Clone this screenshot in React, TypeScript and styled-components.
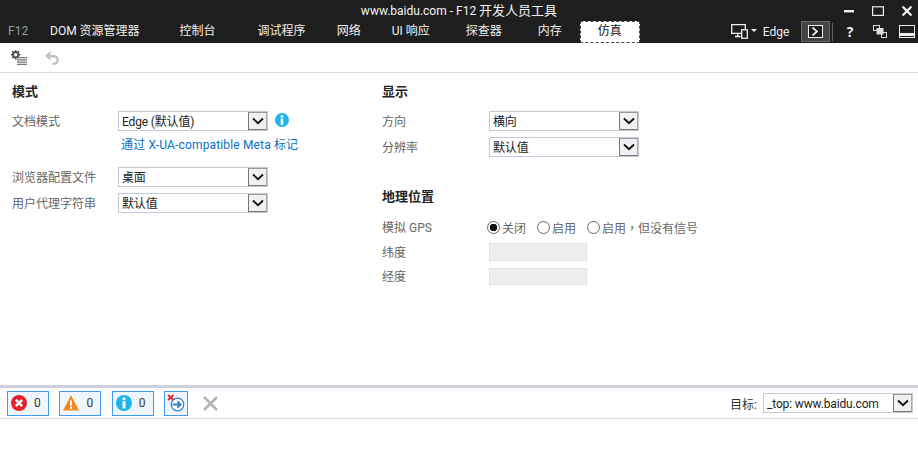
import React from "react"
import styled, { createGlobalStyle } from "styled-components"

const GlobalStyle = createGlobalStyle`
  html, body {
    margin: 0;
    padding: 0;
    background: #fff;
  }
  body {
    font-family: Roboto, "Noto Sans CJK SC", sans-serif;
    font-size: 12px;
    color: #222;
  }
`

const tabs = [
  { label: "DOM 资源管理器", gap: 23 },
  { label: "控制台", gap: 40 },
  { label: "调试程序", gap: 42 },
  { label: "网络", gap: 31 },
  { label: "UI 响应", gap: 31 },
  { label: "探查器", gap: 36 },
  { label: "内存", gap: 36 },
]

function Chevron() {
  return (
    <svg width="12" height="8" viewBox="0 0 12 8">
      <path d="M1 1.5 L6 6.2 L11 1.5" fill="none" stroke="#111" strokeWidth="1.9" />
    </svg>
  )
}

function Dropdown({ value, width = 150 }: { value: string; width?: number }) {
  return (
    <Select $width={width}>
      <SelectValue>{value}</SelectValue>
      <SelectArrow>
        <Chevron />
      </SelectArrow>
    </Select>
  )
}

function InfoIcon({ size }: { size: number }) {
  return (
    <svg width={size} height={size} viewBox="0 0 16 16">
      <circle cx="8" cy="8" r="8" fill="#1eb4ec" />
      <circle cx="8" cy="3.8" r="1.5" fill="#fff" />
      <rect x="6.5" y="6.2" width="3" height="7.2" fill="#fff" />
    </svg>
  )
}

function ErrorIcon() {
  return (
    <svg width="16" height="16" viewBox="0 0 16 16">
      <circle cx="8" cy="8" r="8" fill="#e5202e" />
      <path d="M4.8 4.8 L11.2 11.2 M11.2 4.8 L4.8 11.2" stroke="#fff" strokeWidth="2.4" />
    </svg>
  )
}

function WarningIcon() {
  return (
    <svg width="16" height="16" viewBox="0 0 16 16">
      <path d="M8 0 L16 15.5 L0 15.5 Z" fill="#f58a1f" />
      <rect x="7" y="5.5" width="2" height="5.5" fill="#fff" />
      <rect x="7" y="12" width="2" height="2" fill="#fff" />
    </svg>
  )
}

function ClearOnNavigateIcon() {
  return (
    <svg width="18" height="18" viewBox="0 0 18 18">
      <circle cx="10.5" cy="10.5" r="6.3" fill="#fff" stroke="#2f7fc8" strokeWidth="1.2" />
      <path d="M5.5 10.5 H13.5 M10.5 7.5 L13.7 10.5 L10.5 13.5" fill="none" stroke="#2f7fc8" strokeWidth="1.8" />
      <path d="M1 1 L6.5 6 M6.5 1 L1 6" stroke="#e5202e" strokeWidth="1.7" />
    </svg>
  )
}

function SettingsListIcon() {
  return (
    <svg width="16" height="15" viewBox="0 0 16 15">
      <circle cx="4.7" cy="4.7" r="2.7" fill="none" stroke="#555" strokeWidth="2" />
      <path
        d="M4.7 0 V2 M4.7 7.5 V9.5 M0 4.7 H2 M7.5 4.7 H9.5 M1.3 1.3 L2.8 2.8 M6.6 6.6 L8.1 8.1 M8.1 1.3 L6.6 2.8 M2.8 6.6 L1.3 8.1"
        stroke="#444"
        strokeWidth="1.3"
      />
      <path d="M6 7.6 H16 M6 9.9 H16 M6 12.2 H16 M6 14.4 H16" stroke="#777" strokeWidth="1.3" />
    </svg>
  )
}

function UndoIcon() {
  return (
    <svg width="14" height="14" viewBox="0 0 14 14">
      <path d="M3 5.2 H8 C14 5.2 14.5 12.5 7.5 12.8" fill="none" stroke="#c4c4c4" strokeWidth="2.6" />
      <path d="M0 5 L5.5 0 V9.5 Z" fill="#c4c4c4" />
    </svg>
  )
}

function DeviceIcon() {
  return (
    <svg width="17" height="15" viewBox="0 0 17 15">
      <path d="M0.7 0.7 H14.3 V9.3 H0.7 Z M4 12.5 H9.5 M6.8 9.5 V12.5" fill="none" stroke="#f0f0f0" strokeWidth="1.3" />
      <rect x="10.7" y="5.7" width="5.6" height="8.6" fill="#1e1e1e" stroke="#f0f0f0" strokeWidth="1.3" />
    </svg>
  )
}

function ConsoleIcon() {
  return (
    <svg width="15" height="13" viewBox="0 0 15 13">
      <rect x="0.5" y="0.5" width="14" height="12" fill="#1e1e1e" stroke="#eee" />
      <path d="M4.5 2.5 L9 6.5 L4.5 10.5" fill="none" stroke="#eee" strokeWidth="1.7" />
    </svg>
  )
}

function CascadeIcon() {
  return (
    <svg width="14" height="13" viewBox="0 0 14 13">
      <rect x="0.5" y="0.5" width="6" height="5" fill="none" stroke="#ddd" />
      <rect x="8.5" y="7.5" width="5" height="5" fill="none" stroke="#ddd" />
      <rect x="3.5" y="3" width="7" height="6.5" fill="#ddd" />
    </svg>
  )
}

function DockIcon() {
  return (
    <svg width="16" height="13" viewBox="0 0 16 13">
      <rect x="0.5" y="0.5" width="15" height="12" fill="none" stroke="#eee" />
      <rect x="1" y="8" width="14" height="3" fill="#eee" />
    </svg>
  )
}

export default function App() {
  return (
    <Page>
      <GlobalStyle />
      <Header>
        <TitleRow>
          <span />
          <Title>
            www.baidu.com - F12 <TitleCjk>开发人员工具</TitleCjk>
          </Title>
          <WindowButtons>
            <svg width="10" height="3" viewBox="0 0 10 3">
              <rect width="10" height="2.4" fill="#eee" />
            </svg>
            <svg width="12" height="10" viewBox="0 0 12 10">
              <rect x="0.6" y="0.8" width="10.8" height="8.6" fill="none" stroke="#eee" strokeWidth="1.2" />
            </svg>
            <svg width="10" height="10" viewBox="0 0 10 10">
              <path d="M0.5 0.5 L9.5 9.5 M9.5 0.5 L0.5 9.5" stroke="#f4f4f4" strokeWidth="2.2" />
            </svg>
          </WindowButtons>
        </TitleRow>
        <TabRow>
          <Brand>F12</Brand>
          {tabs.map(tab => (
            <Tab key={tab.label} $gap={tab.gap}>
              {tab.label}
            </Tab>
          ))}
          <ActiveTab>仿真</ActiveTab>
          <TabTools>
            <DeviceIcon />
            <Caret />
            <EngineName>Edge</EngineName>
            <ConsoleButton>
              <ConsoleIcon />
            </ConsoleButton>
            <ToolDivider />
            <HelpMark>?</HelpMark>
            <CascadeSlot>
              <CascadeIcon />
            </CascadeSlot>
            <DockIcon />
          </TabTools>
        </TabRow>
      </Header>

      <Toolbar>
        <SettingsListIcon />
        <UndoIcon />
      </Toolbar>

      <Content>
        <LeftColumn>
          <SectionTitle>模式</SectionTitle>
          <FieldRow>
            <FieldLabel>文档模式</FieldLabel>
            <Dropdown value="Edge (默认值)" />
            <InfoSlot>
              <InfoIcon size={14} />
            </InfoSlot>
          </FieldRow>
          <MetaLink>通过 X-UA-compatible Meta 标记</MetaLink>
          <FieldRow>
            <FieldLabel>浏览器配置文件</FieldLabel>
            <Dropdown value="桌面" />
          </FieldRow>
          <FieldRow>
            <FieldLabel>用户代理字符串</FieldLabel>
            <Dropdown value="默认值" />
          </FieldRow>
        </LeftColumn>

        <RightColumn>
          <SectionTitle>显示</SectionTitle>
          <FieldRow>
            <FieldLabel>方向</FieldLabel>
            <Dropdown value="横向" />
          </FieldRow>
          <FieldRow>
            <FieldLabel>分辨率</FieldLabel>
            <Dropdown value="默认值" />
          </FieldRow>
          <GeoTitle>地理位置</GeoTitle>
          <GpsRow>
            <FieldLabel>模拟 GPS</FieldLabel>
            <RadioGroup>
              <RadioOption>
                <Radio $checked />
                关闭
              </RadioOption>
              <RadioOption>
                <Radio />
                启用
              </RadioOption>
              <RadioOption>
                <Radio />
                <span>
                  启用<CenteredComma>，</CenteredComma>但没有信号
                </span>
              </RadioOption>
            </RadioGroup>
          </GpsRow>
          <CoordRow>
            <FieldLabel>纬度</FieldLabel>
            <CoordInput $height={18} />
          </CoordRow>
          <CoordRow>
            <FieldLabel>经度</FieldLabel>
            <CoordInput $height={17} />
          </CoordRow>
        </RightColumn>
      </Content>

      <ConsoleBar>
        <CountButton>
          <ErrorIcon />
          <Count>0</Count>
        </CountButton>
        <CountButton>
          <WarningIcon />
          <Count>0</Count>
        </CountButton>
        <CountButton>
          <InfoIcon size={16} />
          <Count>0</Count>
        </CountButton>
        <ClearToggle>
          <ClearOnNavigateIcon />
        </ClearToggle>
        <ClearAll>
          <svg width="15" height="15" viewBox="0 0 15 15">
            <path d="M1 1 L14 14 M14 1 L1 14" stroke="#b4b4b4" strokeWidth="2.6" />
          </svg>
        </ClearAll>
        <TargetBox>
          <TargetLabel>目标:</TargetLabel>
          <Dropdown value="_top: www.baidu.com" />
        </TargetBox>
      </ConsoleBar>
    </Page>
  )
}

const Page = styled.div`
  display: flex;
  flex-direction: column;
  width: 918px;
  height: 464px;
  overflow: hidden;
`

const Header = styled.header`
  display: flex;
  flex-direction: column;
  height: 43px;
  background: #1e1e1e;
  color: #f0f0f0;
`

const TitleRow = styled.div`
  display: grid;
  grid-template-columns: 1fr auto 1fr;
  align-items: center;
  height: 21px;
`

const Title = styled.div`
  font-size: 12px;
  line-height: 21px;
  color: #f4f4f4;
`

const TitleCjk = styled.span`
  font-size: 13px;
`

const WindowButtons = styled.div`
  display: flex;
  justify-content: flex-end;
  align-items: center;
  gap: 18px;
  padding-right: 6px;
`

const TabRow = styled.nav`
  display: flex;
  align-items: stretch;
  height: 22px;
  padding-left: 8px;
`

const Brand = styled.div`
  width: 19px;
  line-height: 21px;
  font-size: 12px;
  color: #9a9a9a;
`

const Tab = styled.div<{ $gap: number }>`
  margin-left: ${p => p.$gap}px;
  line-height: 21px;
  font-size: 12px;
  white-space: nowrap;
  color: #f0f0f0;
`

const ActiveTab = styled.div`
  box-sizing: border-box;
  width: 60px;
  margin-left: 18px;
  border: 1px dashed #444;
  background: #fff;
  color: #111;
  font-size: 12px;
  line-height: 19px;
  text-align: center;
`

const TabTools = styled.div`
  display: flex;
  align-items: center;
  margin-left: 91px;
  height: 21px;
`

const Caret = styled.span`
  width: 0;
  height: 0;
  margin: 0 6px 3px 3px;
  border-left: 3px solid transparent;
  border-right: 3px solid transparent;
  border-top: 3px solid #eee;
`

const EngineName = styled.span`
  width: 38px;
  font-size: 12px;
  color: #eee;
`

const ConsoleButton = styled.div`
  box-sizing: border-box;
  display: flex;
  align-items: center;
  justify-content: center;
  width: 29px;
  height: 21px;
  border: 1px solid #6a6a6a;
  background: #444;
`

const ToolDivider = styled.div`
  width: 1px;
  height: 18px;
  margin: 0 14px 0 2px;
  background: #666;
`

const HelpMark = styled.span`
  width: 26px;
  font-family: "Open Sans", sans-serif;
  font-weight: 700;
  font-size: 14px;
  color: #eee;
`

const CascadeSlot = styled.span`
  display: flex;
  margin-right: 12px;
`

const Toolbar = styled.div`
  display: flex;
  align-items: center;
  gap: 18px;
  height: 29px;
  padding-left: 11px;
  border-bottom: 1px solid #dcdcdc;
`

const Content = styled.main`
  display: flex;
  box-sizing: border-box;
  height: 315px;
  border-bottom: 3px solid #cfd0da;
`

const LeftColumn = styled.section`
  width: 370px;
  padding: 9px 0 0 12px;
  box-sizing: border-box;
`

const SectionTitle = styled.h2`
  margin: 0 0 10px;
  font-size: 13px;
  font-weight: 700;
  line-height: 19px;
  color: #222;
`

const GeoTitle = styled(SectionTitle)`
  margin: 30px 0 11px;
`

const FieldRow = styled.div`
  display: flex;
  align-items: center;
  margin-bottom: 6px;
`

const GpsRow = styled(FieldRow)`
  height: 20px;
`

const CoordRow = styled(FieldRow)`
  height: 18px;
`

const FieldLabel = styled.label`
  width: 106px;
  flex: none;
  padding-bottom: 2px;
  font-size: 12px;
  color: #666;
`

const RightColumn = styled.section`
  padding: 9px 0 0 12px;

  ${FieldLabel} {
    width: 107px;
  }
`

const InfoSlot = styled.span`
  display: flex;
  margin-left: 7px;
  margin-bottom: 3px;
`

const MetaLink = styled.a`
  display: block;
  margin: -1px 0 13px 106px;
  padding-left: 3px;
  font-size: 12px;
  line-height: 18px;
  letter-spacing: 0.15px;
  color: #0a70c2;
`

const Select = styled.div<{ $width: number }>`
  box-sizing: border-box;
  display: flex;
  align-items: center;
  justify-content: space-between;
  width: ${p => p.$width}px;
  height: 20px;
  border: 1px solid #c6c8d8;
  background: #fff;
`

const SelectValue = styled.span`
  padding: 2px 0 0 3px;
  font-size: 12px;
  line-height: 16px;
  letter-spacing: -0.15px;
  color: #222;
  white-space: nowrap;
`

const SelectArrow = styled.span`
  box-sizing: border-box;
  display: flex;
  align-items: center;
  justify-content: center;
  width: 19px;
  height: 18px;
  border: 1px solid #777;
  border-top-color: #999;
  border-right-color: #aaa;
  background: #f1f1f1;
`

const RadioGroup = styled.div`
  display: flex;
  align-items: center;
  margin-left: -2px;
  gap: 11px;
`

const RadioOption = styled.span`
  display: flex;
  align-items: center;
  gap: 2px;
  font-size: 12px;
  color: #666;
`

const CenteredComma = styled.span`
  font-family: "Noto Sans CJK TC", sans-serif;
`

const Radio = styled.span<{ $checked?: boolean }>`
  box-sizing: border-box;
  display: inline-block;
  width: 13px;
  height: 13px;
  border: 1px solid #666;
  border-radius: 50%;
  background: ${p => (p.$checked ? "radial-gradient(circle, #111 0 3.5px, #fff 4px)" : "#fff")};
`

const CoordInput = styled.div<{ $height: number }>`
  box-sizing: border-box;
  width: 98px;
  height: ${p => p.$height}px;
  border: 1px solid #e2e2e2;
  background: #eeeef0;
`

const ConsoleBar = styled.footer`
  display: flex;
  align-items: center;
  height: 30px;
  padding-left: 7px;
  border-bottom: 1px solid #dcdcdc;
`

const CountButton = styled.div`
  box-sizing: border-box;
  display: flex;
  align-items: center;
  width: 42px;
  height: 25px;
  margin-right: 10.4px;
  padding-left: 3px;
  border: 1px solid #3f9bf5;
  background: #eff6fd;
`

const Count = styled.span`
  margin-left: 7px;
  font-size: 12px;
  color: #333;
`

const ClearToggle = styled(CountButton)`
  width: 24px;
  padding-left: 2px;
  margin-right: 15px;
`

const ClearAll = styled.div`
  display: flex;
`

const TargetBox = styled.div`
  display: flex;
  align-items: center;
  margin-left: auto;
  gap: 6px;
  padding-right: 5px;
`

const TargetLabel = styled.span`
  font-size: 12px;
  color: #333;
`
